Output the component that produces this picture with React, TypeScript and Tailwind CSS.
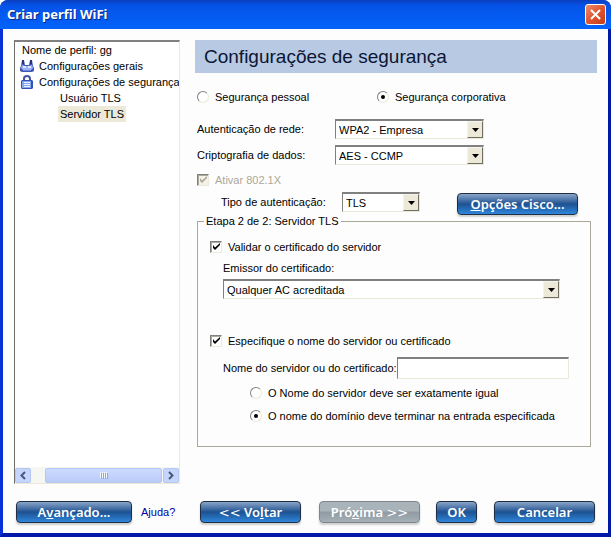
import React from "react";
import clsx from "clsx";

const treeItems = [
  { label: "Nome de perfil: gg", level: 0 },
  { label: "Configurações gerais", level: 1, icon: "adapter" },
  { label: "Configurações de segurança", level: 1, icon: "lock" },
  { label: "Usuário TLS", level: 2 },
  { label: "Servidor TLS", level: 2, active: true },
];

const AdapterIcon = () => (
  <svg width="14" height="14" viewBox="0 0 14 14" className="shrink-0" aria-hidden="true">
    <path d="M2 1h2l1 5h4l1-5h2l1 6 1 2v3l-2 1H2l-2-1V9l1-2z" fill="#4257b4" />
    <path d="M2 1h2v4H2zM10 1h2v4h-2z" fill="#27347c" />
    <path d="M2 6l3 1h4l3-1 1 3-2 2H3L1 9z" fill="#9db4f4" />
    <path d="M3 7h3v2H3zM8 7h3v2H8z" fill="#dbe5ff" />
    <path d="M3 11h8v1H3z" fill="#6d86dc" />
  </svg>
);

const LockIcon = () => (
  <svg width="14" height="14" viewBox="0 0 14 14" className="shrink-0" aria-hidden="true">
    <path d="M4 6V3.500a3 2.500 0 0 1 6 0V6" fill="none" stroke="#4256a4" strokeWidth="2" />
    <path d="M2 5h10l1 1v7l-1 1H2l-1-1V6z" fill="#3350b4" />
    <path d="M2 6h9v7H2z" fill="#86a9ee" />
    <path d="M4 7h6v1H4zM4 9h6v1H4zM4 11h6v1H4z" fill="#edf3ff" />
  </svg>
);

const ScrollArrow = ({ d, label }: { d: string; label: string }) => (
  <button
    type="button"
    aria-label={label}
    className="flex h-[15px] w-4 items-center justify-center rounded-xs border border-[#b4c6f2] bg-[#c6d5fc]"
  >
    <svg width="8" height="9" viewBox="0 0 8 9" aria-hidden="true">
      <path d={d} fill="none" stroke="#45597f" strokeWidth="2" />
    </svg>
  </button>
);

const Sidebar = () => {
  return (
    <aside className="flex w-[166px] shrink-0 flex-col border border-t-2 border-[#ece9d8] border-t-[#808080] border-l-[#716f64] bg-white">
      <ul className="flex-1 overflow-hidden whitespace-nowrap">
        {treeItems.map(({ label, level, icon, active }) => (
          <li
            key={label}
            className={clsx(
              "flex h-4 items-center",
              level === 0 && "pl-[7px]",
              level === 1 && "gap-[5px] pl-[5px]",
              level === 2 && "pl-[43px]",
            )}
          >
            {icon === "adapter" && <AdapterIcon />}
            {icon === "lock" && <LockIcon />}
            <a href="#" className={clsx("leading-4", level === 2 && "px-[2px]", active && "bg-[#ece9d8]")}>
              {label}
            </a>
          </li>
        ))}
      </ul>
      <div className="flex h-4 items-center bg-[#f6f6f3]">
        <ScrollArrow d="M6 1L2.500 4.500L6 8" label="Rolar para a esquerda" />
        <div className="mr-px ml-[14px] flex h-[15px] flex-1 items-center justify-center gap-px rounded-xs border border-[#b4c6f2] bg-linear-to-b from-[#cddbff] to-[#b9cbf8]">
          {[0, 1, 2, 3].map((n) => (
            <span key={n} className="h-[6px] w-px bg-[#f2f6ff] shadow-[1px_1px_0_#8ca4e8]" />
          ))}
        </div>
        <ScrollArrow d="M2 1L5.500 4.500L2 8" label="Rolar para a direita" />
      </div>
    </aside>
  );
};

type ChoiceProps = {
  id: string;
  label: string;
  checked?: boolean;
  disabled?: boolean;
  name?: string;
};

const Radio = ({ id, label, checked, name }: ChoiceProps) => (
  <div className="flex h-4 items-center gap-[6px]">
    <input
      type="radio"
      id={id}
      name={name}
      defaultChecked={checked}
      className="flex size-3 appearance-none items-center justify-center rounded-full border border-[#ece9d8] border-t-[#808080] border-l-[#808080] bg-white checked:before:size-1 checked:before:rounded-full checked:before:bg-black"
    />
    <label htmlFor={id}>{label}</label>
  </div>
);

const Checkbox = ({ id, label, checked, disabled }: ChoiceProps) => (
  <div className={clsx("flex h-4 items-center gap-[6px]", disabled ? "text-[#aca899]" : "text-black")}>
    <span className="relative size-3">
      <input
        type="checkbox"
        id={id}
        defaultChecked={checked}
        disabled={disabled}
        className="peer block size-3 appearance-none border border-[#ece9d8] border-t-[#808080] border-l-[#808080] bg-white shadow-[inset_1px_1px_0_#aca899] disabled:bg-[#f4f2e8]"
      />
      <svg
        viewBox="0 0 12 12"
        className="pointer-events-none absolute inset-0 hidden size-3 peer-checked:block"
        aria-hidden="true"
      >
        <path d="M3 4v3l2 2l5-5V2L5 6.500z" fill="currentColor" />
      </svg>
    </span>
    <label htmlFor={id}>{label}</label>
  </div>
);

type SelectProps = { id: string; value: string; className?: string };

const Select = ({ id, value, className }: SelectProps) => (
  <span className={clsx("relative block", className)}>
    <select
      id={id}
      className="block h-5 w-full appearance-none border border-t-2 border-[#ece9d8] border-t-[#808080] border-l-[#808080] bg-white pr-5 pl-[3px] leading-4"
    >
      <option>{value}</option>
    </select>
    <span className="pointer-events-none absolute top-[2px] right-px flex h-[17px] w-4 items-center justify-center border border-[#f6f4ea] border-r-[#716f64] border-b-[#716f64] bg-[#ece9d8]">
      <svg width="7" height="4" viewBox="0 0 7 4" aria-hidden="true">
        <path d="M0 0h7L3.500 4z" fill="#000" />
      </svg>
    </span>
  </span>
);

type ButtonProps = { children: React.ReactNode; className?: string; disabled?: boolean };

const Button = ({ children, className, disabled }: ButtonProps) => (
  <button
    type="button"
    disabled={disabled}
    className={clsx(
      "h-[22px] rounded-sm border bg-linear-to-b font-['Noto_Sans',sans-serif] text-[13px] leading-5 font-semibold whitespace-nowrap text-white shadow-[0_2px_2px_#00000030]",
      disabled
        ? "border-[#7d868c] from-[#a9b3ba] from-45% via-[#8f9aa2] via-50% to-[#a4afb6]"
        : "border-[#1f2f45] from-[#8aa5c8] via-[#1d5291] via-50% to-[#2f86dc]",
      className,
    )}
  >
    {children}
  </button>
);

const Title = () => (
  <header className="flex h-[29px] items-center justify-between rounded-t-lg bg-linear-to-b from-[#0a3fc0] via-[#0553e8] via-20% to-[#0363fb] pr-[5px] pl-[7px]">
    <h1 className="font-['Noto_Sans',sans-serif] text-[13px] font-bold text-white [text-shadow:1px_1px_0_#0a2a80]">
      Criar perfil WiFi
    </h1>
    <button
      type="button"
      aria-label="Fechar"
      className="flex size-[21px] items-center justify-center rounded-[3px] border border-white bg-linear-to-br from-[#eb8b6c] via-[#e0552f] to-[#c23c14]"
    >
      <svg width="11" height="11" viewBox="0 0 11 11" aria-hidden="true">
        <path d="M1 1l9 9M10 1l-9 9" stroke="#fff" strokeWidth="2" />
      </svg>
    </button>
  </header>
);

const SecurityForm = () => {
  return (
    <main className="min-w-0 flex-1">
      <h2 className="bg-[#b8c9e4] pl-[9px] text-[19px] leading-[33px] text-[#0a1633]">Configurações de segurança</h2>
      <div className="mt-4 mr-[6px] ml-[2px]">
        <div className="flex">
          <div className="w-[180px]">
            <Radio id="personal" name="security" label="Segurança pessoal" />
          </div>
          <Radio id="enterprise" name="security" label="Segurança corporativa" checked />
        </div>

        <div className="mt-[14px] grid grid-cols-[138px_149px] items-center gap-y-[6px]">
          <label htmlFor="network-auth">Autenticação de rede:</label>
          <Select id="network-auth" value="WPA2 - Empresa" />
          <label htmlFor="encryption">Criptografia de dados:</label>
          <Select id="encryption" value="AES - CCMP" />
        </div>

        <div className="mt-[7px]">
          <Checkbox id="enable-8021x" label="Ativar 802.1X" checked disabled />
        </div>

        <div className="mt-1 flex h-[23px] items-start pl-6">
          <label htmlFor="auth-type" className="w-[121px] leading-5">
            Tipo de autenticação:
          </label>
          <Select id="auth-type" value="TLS" className="w-[78px]" />
          <Button className="mr-[13px] ml-auto w-[121px] self-end">
            <u>O</u>pções Cisco...
          </Button>
        </div>

        <fieldset className="border border-[#aca899] pb-[22px] pl-3">
          <legend className="-ml-[6px] px-[2px] leading-3">Etapa 2 de 2: Servidor TLS</legend>
          <div className="pt-3">
            <Checkbox id="validate-cert" label="Validar o certificado do servidor" checked />
          </div>
          <div className="mt-[6px] mr-[30px] ml-[13px]">
            <label htmlFor="issuer" className="block leading-[14px]">
              Emissor do certificado:
            </label>
            <Select id="issuer" value="Qualquer AC acreditada" className="mt-1" />
          </div>
          <div className="mt-[34px]">
            <Checkbox id="specify-name" label="Especifique o nome do servidor ou certificado" checked />
          </div>
          <div className="mt-2 mr-[21px] ml-[13px] flex items-center">
            <label htmlFor="server-name" className="shrink-0 whitespace-nowrap">
              Nome do servidor ou do certificado:
            </label>
            <input
              id="server-name"
              type="text"
              className="h-[22px] min-w-0 flex-1 border border-t-2 border-[#ece9d8] border-t-[#808080] border-l-[#808080] bg-white px-1"
            />
          </div>
          <div className="mt-[6px] ml-10 flex flex-col gap-[7px]">
            <Radio id="exact" name="match" label="O Nome do servidor deve ser exatamente igual" />
            <Radio
              id="domain"
              name="match"
              label="O nome do domínio deve terminar na entrada especificada"
              checked
            />
          </div>
        </fieldset>
      </div>
    </main>
  );
};

const Footer = () => (
  <footer className="flex items-center px-[13px] pt-[17px] pb-[10px]">
    <Button className="w-[116px]">
      A<u>v</u>ançado...
    </Button>
    <a href="#" className="ml-[9px] text-[#00009c]">
      Ajuda?
    </a>
    <div className="ml-auto flex">
      <Button className="w-[101px]">
        <span className="font-['DejaVu_Sans',sans-serif] font-normal">&lt;&lt;</span> Vo<u>l</u>tar
      </Button>
      <Button className="ml-[18px] w-[101px]" disabled>
        Pró<u>x</u>ima <span className="font-['DejaVu_Sans',sans-serif] font-normal">&gt;&gt;</span>
      </Button>
      <Button className="ml-4 w-[41px]">OK</Button>
      <Button className="ml-[17px] w-[101px]">Cancelar</Button>
    </div>
  </footer>
);

export default function App() {
  return (
    <div className="flex min-h-screen flex-col rounded-t-lg bg-[#0a3fc8] font-['Liberation_Sans',Arial,sans-serif] text-[11px] text-black">
      <Title />
      <div className="flex flex-1 flex-col border-x-3 border-b-4 border-[#0831d9] border-r-[#0019a8] border-b-[#0019a8] bg-[#fdfdfd]">
        <div className="flex flex-1 gap-[15px] px-[11px] pt-[11px]">
          <Sidebar />
          <SecurityForm />
        </div>
        <Footer />
      </div>
    </div>
  );
}
